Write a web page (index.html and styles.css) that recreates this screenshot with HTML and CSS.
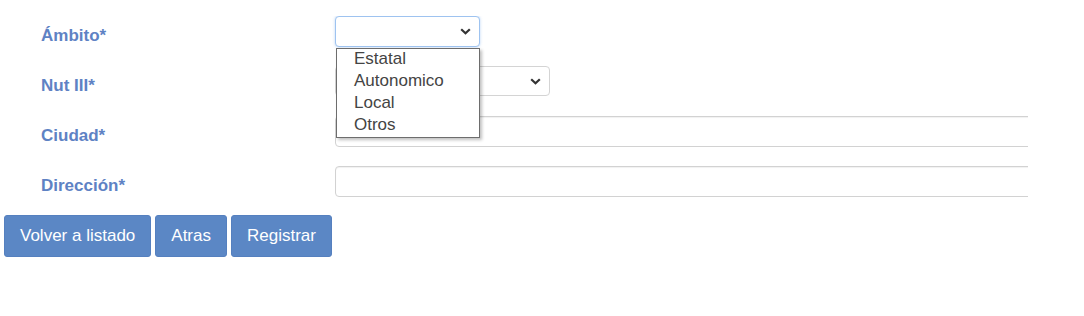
FILE: index.html
```html
<!DOCTYPE html>
<html lang="es">
<head>
    <title>Alta</title>
    <link rel="stylesheet" href="styles.css">
</head>
<body>
    <div class="form">
        <div class="row">
            <label class="label">Ámbito*</label>
            <div class="field">
                <div class="select select-open">
                    <svg class="chevron" width="11" height="7" viewBox="0 0 11 7"><path d="M1.2 1.2 L5.5 5.3 L9.8 1.2" fill="none" stroke="#333" stroke-width="2.2"/></svg>
                </div>
                <ul class="options">
                    <li>Estatal</li>
                    <li>Autonomico</li>
                    <li>Local</li>
                    <li>Otros</li>
                </ul>
            </div>
        </div>
        <div class="row">
            <label class="label">Nut III*</label>
            <div class="field">
                <div class="select select-wide">
                    <svg class="chevron" width="11" height="7" viewBox="0 0 11 7"><path d="M1.2 1.2 L5.5 5.3 L9.8 1.2" fill="none" stroke="#333" stroke-width="2.2"/></svg>
                </div>
            </div>
        </div>
        <div class="row">
            <label class="label">Ciudad*</label>
            <div class="field">
                <input class="input" type="text">
            </div>
        </div>
        <div class="row">
            <label class="label">Dirección*</label>
            <div class="field">
                <input class="input" type="text">
            </div>
        </div>
    </div>
    <div class="buttons">
        <button class="button">Volver a listado</button>
        <button class="button">Atras</button>
        <button class="button">Registrar</button>
    </div>
</body>
</html>
```

FILE: styles.css
```css
body {
    font-family: "Liberation Sans", Arial, sans-serif;
    background-color: #ffffff;
    margin: 0;
    padding: 16px 0 0 4px;
}

.form {
    width: 1024px;
    overflow: hidden;
}

.row {
    display: flex;
    align-items: flex-start;
    height: 31px;
    margin-bottom: 19px;
}

.row:last-child {
    margin-bottom: 18px;
}

.label {
    flex-shrink: 0;
    width: 294px;
    padding: 11px 0 0 37px;
    font-size: 17px;
    font-weight: bold;
    color: #5e82c4;
    line-height: 18px;
}

.field {
    position: relative;
    flex: 1;
    min-width: 0;
}

.select {
    position: relative;
    box-sizing: border-box;
    width: 145px;
    height: 31px;
    border: 1px solid #d4d4d4;
    border-radius: 4px;
    background: #fff;
}

.select-open {
    border-color: #9ec3f0;
    box-shadow: 0 0 3px rgba(102, 160, 233, 0.45);
}

.select-wide {
    width: 215px;
    height: 30px;
}

.chevron {
    position: absolute;
    right: 8px;
    top: 11px;
}

.options {
    position: absolute;
    top: 32px;
    left: 1px;
    width: 144px;
    box-sizing: border-box;
    margin: 0;
    padding: 0;
    list-style: none;
    background: #fff;
    border: 1px solid #6d6d6d;
    box-shadow: 2px 2px 3px rgba(0, 0, 0, 0.25);
    z-index: 2;
}

.options li {
    padding-left: 17px;
    height: 22px;
    line-height: 20px;
    font-size: 17px;
    color: #444;
}

.input {
    box-sizing: border-box;
    display: block;
    width: 760px;
    height: 31px;
    margin: 0;
    border: 1px solid #d2d2d2;
    border-radius: 4px;
    box-shadow: inset 0 1px 1px rgba(0, 0, 0, 0.06);
    background: #fff;
}

.buttons {
    display: flex;
    gap: 4px;
}

.button {
    font-family: "Liberation Sans", Arial, sans-serif;
    background-color: #5b87c5;
    color: #ffffff;
    border: 1px solid #5580bf;
    height: 42px;
    padding: 0 15px;
    font-size: 17px;
    border-radius: 3px;
}
```
